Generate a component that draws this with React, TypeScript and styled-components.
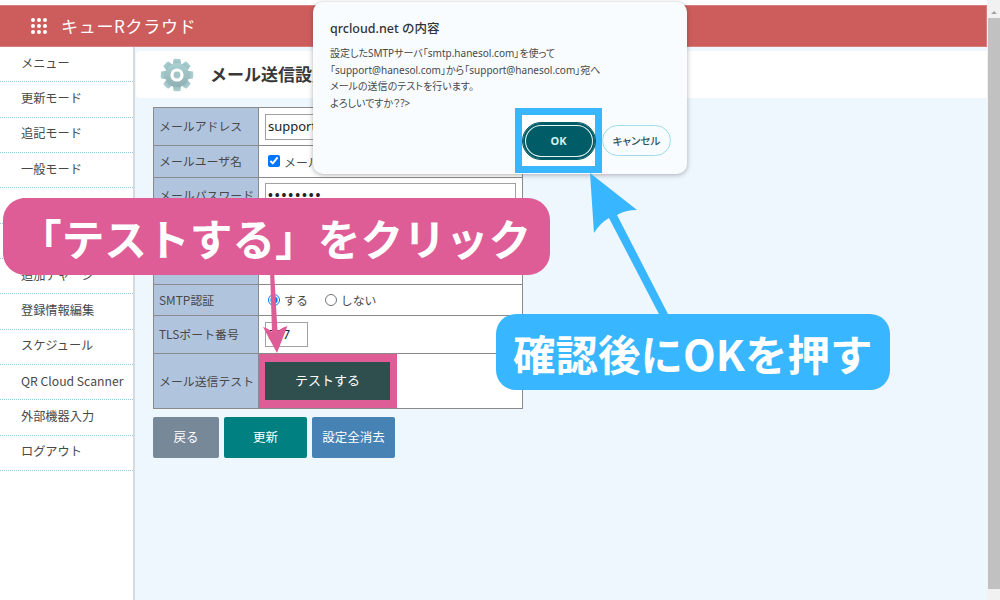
import React from "react";
import styled, { createGlobalStyle } from "styled-components";

const Global = createGlobalStyle`
  html, body { margin: 0; padding: 0; width: 1000px; height: 600px; overflow: hidden; background: #fff; }
  body { font-family: "Noto Sans CJK JP", "Noto Sans", sans-serif; color: #3a3a3a; }
  * { box-sizing: border-box; }
`;

const Screen = styled.div`
  position: relative;
  display: flex;
  width: 1000px;
  height: 600px;
  overflow: hidden;
`;
const Page = styled.div`
  flex: 1;
  display: flex;
  flex-direction: column;
  padding-top: 5px;
  min-width: 0;
`;
const Scrollbar = styled.div`
  width: 13px;
  display: flex;
  flex-direction: column;
  align-items: center;
  padding-bottom: 11px;
  background: #f1f1f1;
`;
const ScrollUp = styled.div`
  height: 18px;
  display: flex;
  align-items: center;
  justify-content: center;
  padding-top: 6px;
  &::before {
    content: "";
    border-left: 3px solid transparent;
    border-right: 3px solid transparent;
    border-bottom: 3px solid #a3a3a3;
  }
`;
const ScrollThumb = styled.div`
  flex: 1;
  width: 12px;
  margin-left: 1px;
  background: #c1c1c1;
`;
const Header = styled.header`
  height: 42px;
  display: flex;
  align-items: center;
  gap: 14px;
  padding-left: 31px;
  background: #cd5c5c;
  border: 1px solid #d77f7f;
  border-left: 0;
  color: #fff;
`;
const HeaderTitle = styled.div`
  font-size: 17px;
  letter-spacing: 0.7px;
  padding-bottom: 1px;
`;
const Body = styled.div`
  flex: 1;
  display: flex;
  min-height: 0;
`;
const Sidebar = styled.nav`
  width: 135px;
  flex-shrink: 0;
  background: #fff;
  border-right: 2px solid #d5dadd;
`;
const SideItem = styled.div`
  height: 35.35px;
  padding: 0 0 3px 21px;
  display: flex;
  align-items: center;
  font-size: 12.2px;
  color: #484848;
  border-bottom: 1px dotted #8fcbe2;
`;
const Main = styled.main`
  flex: 1;
  background: #eef6fe;
  padding-top: 4px;
  min-width: 0;
`;
const TitleStrip = styled.div`
  height: 47px;
  margin-left: 1px;
  display: flex;
  align-items: center;
  gap: 16px;
  padding-left: 24px;
  background: #fff;
  border-radius: 4px 0 0 4px;
`;
const PageTitle = styled.h1`
  margin: 0;
  font-size: 17px;
  font-weight: 700;
  color: #383838;
  padding-bottom: 2px;
`;
const FormArea = styled.div`
  padding: 9px 0 0 18px;
`;
const FormTable = styled.table`
  width: 370px;
  border-collapse: collapse;
  table-layout: fixed;
  background: #fff;
  font-size: 11.9px;
`;
const Row = styled.tr<{ $h: number }>`
  height: ${(p) => p.$h}px;
`;
const LabelCell = styled.td`
  width: 105px;
  padding: 0 0 2px 5px;
  background: #b0c4de;
  border: 1px solid #8a8a8a;
  color: #484848;
  white-space: nowrap;
`;
const ValueCell = styled.td`
  padding: 0 6px;
  border: 1px solid #8a8a8a;
  white-space: nowrap;
  color: #484848;
`;
const FlushCell = styled(ValueCell)`
  padding: 0;
`;
const TextInput = styled.input<{ $w: number; $h: number }>`
  display: block;
  width: ${(p) => p.$w}px;
  height: ${(p) => p.$h}px;
  padding: 0 0 2px 2px;
  border: 1px solid #a0a0a0;
  font: 13px "Noto Sans", sans-serif;
  color: #222;
  background: #fff;
  &[type="password"] {
    letter-spacing: 1.9px;
    font-weight: 700;
  }
`;
const Choice = styled.label`
  display: inline-flex;
  align-items: center;
  gap: 4px;
  margin-right: 14px;
  padding-bottom: 1px;
  input { margin: 0 0 0 3px; width: 12px; height: 12px; }
`;
const TestHighlight = styled.div`
  display: block;
  width: 139px;
  height: 54px;
  margin: -1px 0 0 -1px;
  border: 7px solid #de5d96;
  border-width: 8px 7px;
`;
const TestButton = styled.button`
  width: 125px;
  height: 38px;
  padding: 0 0 2px;
  border: 0;
  background: #2f4f4f;
  color: #fff;
  font: inherit;
  font-size: 13px;
`;
const ButtonRow = styled.div`
  display: flex;
  gap: 5px;
  margin-top: 8px;
`;
const ActionButton = styled.button<{ $w: number; $bg: string }>`
  width: ${(p) => p.$w}px;
  height: 41px;
  padding: 0 0 2px;
  border: 0;
  border-radius: 2px;
  background: ${(p) => p.$bg};
  color: #fff;
  font: inherit;
  font-size: 12.5px;
`;
const Dialog = styled.section`
  position: absolute;
  left: 313px;
  top: 2px;
  width: 374px;
  height: 172px;
  padding: 17px 17px 0;
  background: #f8fcff;
  border-radius: 10px;
  box-shadow: 0 1px 5px rgba(60, 60, 60, 0.4);
`;
const DialogTitle = styled.h2`
  margin: 0 0 6px;
  font-size: 12.5px;
  line-height: 20px;
  font-weight: 500;
  color: #333;
  font-family: "Noto Sans", "Noto Sans CJK JP", sans-serif;
`;
const DialogLine = styled.div`
  font-size: 10px;
  line-height: 16.6px;
  color: #484848;
  white-space: nowrap;
  font-feature-settings: "palt";
  font-family: "Noto Sans", "Noto Sans CJK JP", sans-serif;
`;
const DialogActions = styled.div`
  position: absolute;
  left: 202px;
  top: 106px;
  display: flex;
  align-items: center;
`;
const OkHighlight = styled.div`
  width: 87px;
  height: 65px;
  display: flex;
  align-items: center;
  justify-content: center;
  background: #fff;
  border: 7px solid #38b6ff;
`;
const OkButton = styled.button`
  width: 72px;
  height: 36px;
  border: 0;
  border-radius: 18px;
  background: #005c66;
  box-shadow: inset 0 0 0 2px #005c66, inset 0 0 0 3px #e4f4f4;
  outline: 1px solid #005c66;
  color: #d5eef0;
  font: 700 11px "Noto Sans", sans-serif;
`;
const CancelButton = styled.button`
  width: 69px;
  height: 31px;
  padding: 0 0 1px;
  border: 1px solid #9edcec;
  border-radius: 16px;
  background: #f8fcff;
  color: #2c5560;
  font: 500 10.5px "Noto Sans CJK JP", sans-serif;
  font-feature-settings: "palt";
`;
const Callout = styled.div<{ $x: number; $y: number; $w: number; $h: number; $bg: string; $r: number; $pad: number; $size: number }>`
  position: absolute;
  left: ${(p) => p.$x}px;
  top: ${(p) => p.$y}px;
  width: ${(p) => p.$w}px;
  height: ${(p) => p.$h}px;
  padding-left: ${(p) => p.$pad}px;
  display: flex;
  align-items: center;
  background: ${(p) => p.$bg};
  border-radius: ${(p) => p.$r}px;
  color: #fff;
  font-size: ${(p) => p.$size}px;
  font-weight: 700;
  white-space: nowrap;
`;
const OverlaySvg = styled.svg`
  position: absolute;
  left: 0;
  top: 0;
  pointer-events: none;
`;

const Dots = () => (
  <svg width="16" height="16" viewBox="0 0 16 16" fill="#fff">
    {[2, 8, 14].flatMap((y) => [2, 8, 14].map((x) => <circle key={`${x}-${y}`} cx={x} cy={y} r="2" />))}
  </svg>
);

const Gear = () => (
  <svg width="34" height="34" viewBox="0 0 34 34">
    <defs>
      <linearGradient id="gearFill" x1="0" y1="0" x2="0" y2="1">
        <stop offset="0" stopColor="#abd1d2" />
        <stop offset="1" stopColor="#8fb0b2" />
      </linearGradient>
    </defs>
    <g fill="url(#gearFill)">
      {[0, 45, 90, 135, 180, 225, 270, 315].map((a) => (
        <path key={a} d="M12.5 9 L13.6 1 Q17 0.4 20.4 1 L21.5 9 Z" transform={`rotate(${a} 17 17)`} />
      ))}
      <circle cx="17" cy="17" r="12" />
    </g>
    <circle cx="17" cy="17" r="6.6" fill="#fff" />
    <circle cx="17" cy="17" r="3.4" fill="#a2c5c9" />
  </svg>
);

const sideItems = [
  "メニュー", "更新モード", "追記モード", "一般モード", "設定モード", "課金情報",
  "追加チャージ", "登録情報編集", "スケジュール", "QR Cloud Scanner", "外部機器入力", "ログアウト",
];

export default function App() {
  return (
    <Screen>
      <Global />
      <Page>
        <Header>
          <Dots />
          <HeaderTitle>キューRクラウド</HeaderTitle>
        </Header>
        <Body>
          <Sidebar>
            {sideItems.map((s) => <SideItem key={s}>{s}</SideItem>)}
          </Sidebar>
          <Main>
            <TitleStrip>
              <Gear />
              <PageTitle>メール送信設定</PageTitle>
            </TitleStrip>
            <FormArea>
              <FormTable>
                <tbody>
                  <Row $h={38}>
                    <LabelCell>メールアドレス</LabelCell>
                    <ValueCell><TextInput $w={250} $h={26} readOnly value="support@hanesol.com" /></ValueCell>
                  </Row>
                  <Row $h={32}>
                    <LabelCell>メールユーザ名</LabelCell>
                    <ValueCell><Choice><input type="checkbox" readOnly checked />メールアドレスと同じ</Choice></ValueCell>
                  </Row>
                  <Row $h={36}>
                    <LabelCell>メールパスワード</LabelCell>
                    <ValueCell><TextInput $w={251} $h={26} type="password" readOnly value="password" /></ValueCell>
                  </Row>
                  <Row $h={36}>
                    <LabelCell>SMTPサーバ</LabelCell>
                    <ValueCell />
                  </Row>
                  <Row $h={35}>
                    <LabelCell>SMTPポート</LabelCell>
                    <ValueCell />
                  </Row>
                  <Row $h={31}>
                    <LabelCell>SMTP認証</LabelCell>
                    <ValueCell>
                      <Choice><input type="radio" name="auth" readOnly checked />する</Choice>
                      <Choice><input type="radio" name="auth" readOnly />しない</Choice>
                    </ValueCell>
                  </Row>
                  <Row $h={38}>
                    <LabelCell>TLSポート番号</LabelCell>
                    <ValueCell><TextInput $w={43} $h={25} readOnly value="587" /></ValueCell>
                  </Row>
                  <Row $h={55}>
                    <LabelCell>メール送信テスト</LabelCell>
                    <FlushCell>
                      <TestHighlight><TestButton>テストする</TestButton></TestHighlight>
                    </FlushCell>
                  </Row>
                </tbody>
              </FormTable>
              <ButtonRow>
                <ActionButton $w={66} $bg="#778899">戻る</ActionButton>
                <ActionButton $w={83} $bg="#008080">更新</ActionButton>
                <ActionButton $w={83} $bg="#4682b4">設定全消去</ActionButton>
              </ButtonRow>
            </FormArea>
          </Main>
        </Body>
      </Page>
      <Scrollbar>
        <ScrollUp />
        <ScrollThumb />
      </Scrollbar>

      <Dialog>
        <DialogTitle>qrcloud.net の内容</DialogTitle>
        <DialogLine>設定したSMTPサーバ「smtp.hanesol.com」を使って</DialogLine>
        <DialogLine>「support@hanesol.com」から「support@hanesol.com」宛へ</DialogLine>
        <DialogLine>メールの送信のテストを行います。</DialogLine>
        <DialogLine>よろしいですか？?&gt;</DialogLine>
        <DialogActions>
          <OkHighlight><OkButton>OK</OkButton></OkHighlight>
          <CancelButton>キャンセル</CancelButton>
        </DialogActions>
      </Dialog>

      <OverlaySvg width="1000" height="600" viewBox="0 0 1000 600">
        <path d="M270 270 L274 270 L277.5 331 Q283 327 287.5 326 L277 353 L263 327 Q268 328 272 332 Z" fill="#de5d96" />
        <path d="M590 173 L637 210 Q625 210 617 215 L669 316 L660 316 L609 218 Q600 223 594 233 Z" fill="#38b6ff" />
      </OverlaySvg>

      <Callout $x={3} $y={198} $w={547} $h={77} $bg="#de5d96" $r={22} $pad={16} $size={42.7}>「テストする」をクリック</Callout>
      <Callout $x={496} $y={314} $w={394} $h={76} $bg="#38b6ff" $r={20} $pad={17} $size={42.5}>確認後にOKを押す</Callout>
    </Screen>
  );
}
